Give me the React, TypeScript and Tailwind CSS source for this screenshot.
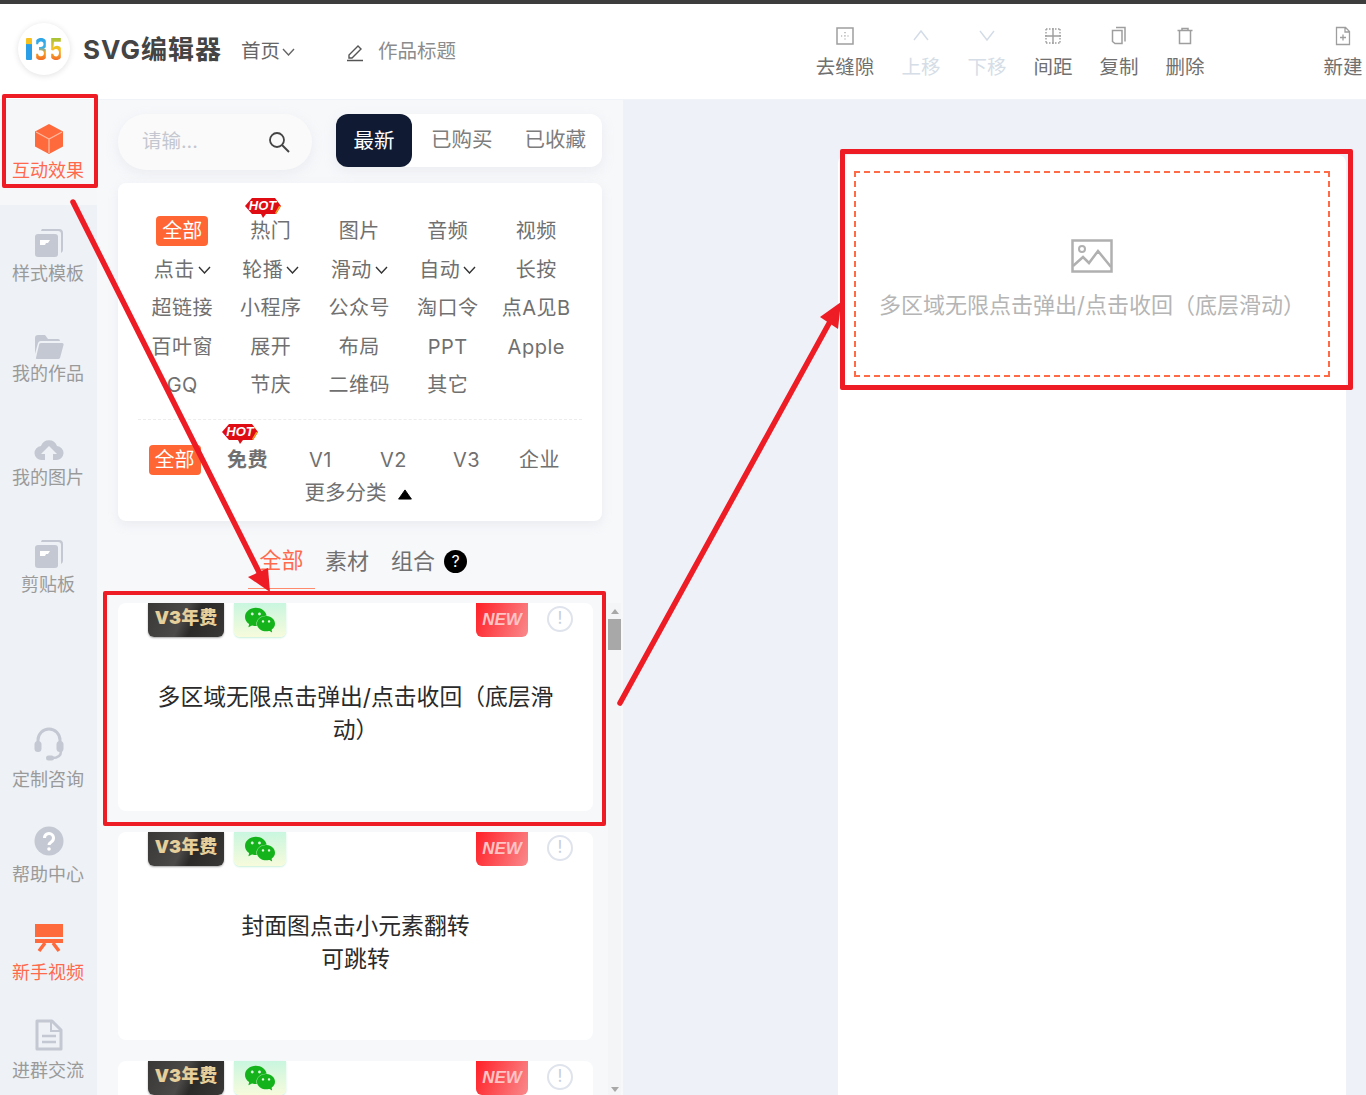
import React from 'react';
import { SiWechat } from 'react-icons/si';

const sideIconClass = 'w-[30px] h-[30px] text-[#c3c8d2]';

const CubeIcon = () => (
    <svg viewBox="0 0 30 32" className="w-[30px] h-[32px]">
        <path d="M15 1 29 8.500V23.500L15 31 1 23.500V8.500Z" fill="#ff6a3c" />
        <path d="M2 9 15 16 28 9M15 16V30" stroke="#ffb9a0" strokeWidth="1.300" fill="none" />
    </svg>
);

const CardsIcon = () => (
    <svg viewBox="0 0 30 30" className={sideIconClass}>
        <path d="M8 1h17a4 4 0 0 1 4 4v17a4 4 0 0 1-2 3V6a3 3 0 0 0-3-3H7a4 4 0 0 1 1-2Z" fill="currentColor" />
        <rect x="1" y="6" width="23" height="23" rx="3" fill="currentColor" />
        <path d="M6 12h10l-2 3h-2l-1 2H6Z" fill="#fff" />
    </svg>
);

const FolderIcon = () => (
    <svg viewBox="0 0 30 26" className="w-[30px] h-[26px] text-[#c3c8d2]">
        <path d="M1 4a3 3 0 0 1 3-3h7l3 4h10a2 2 0 0 1 2 2H7a3 3 0 0 0-3 2L1 20Z" fill="currentColor" />
        <path d="M7 9h21a1.500 1.500 0 0 1 1.500 2L26 24a2 2 0 0 1-2 1H3a1 1 0 0 1-1-1.300L5 11a2 2 0 0 1 2-2Z" fill="currentColor" />
    </svg>
);

const CloudIcon = () => (
    <svg viewBox="0 0 30 24" className="w-[30px] h-[24px] text-[#c3c8d2]">
        <path d="M8 22a7 7 0 0 1-1-14 8.500 8.500 0 0 1 16 0 7 7 0 0 1-1 14h-3v-6h4L15 8l-8 8h4v6Z" fill="currentColor" />
    </svg>
);

const HeadsetIcon = () => (
    <svg viewBox="0 0 30 34" className="w-[30px] h-[34px] text-[#c3c8d2]">
        <path d="M4 16V13a11 11 0 0 1 22 0v3" stroke="currentColor" strokeWidth="3" fill="none" />
        <rect x="0.500" y="14" width="7" height="11" rx="3.500" fill="currentColor" />
        <rect x="22.500" y="14" width="7" height="11" rx="3.500" fill="currentColor" />
        <path d="M27 24c0 5-4 7-9 7" stroke="currentColor" strokeWidth="2.500" fill="none" />
        <rect x="12" y="28.500" width="8" height="5" rx="2.500" fill="currentColor" />
    </svg>
);

const HelpIcon = () => (
    <svg viewBox="0 0 30 30" className={sideIconClass}>
        <circle cx="15" cy="15" r="14.500" fill="currentColor" />
        <path d="M10.500 12a4.500 4.500 0 1 1 7 3.700c-1.500 1-2.500 1.800-2.500 3.300" stroke="#fff" strokeWidth="3" fill="none" />
        <circle cx="15" cy="23" r="1.800" fill="#fff" />
    </svg>
);

const VideoIcon = () => (
    <svg viewBox="0 0 30 30" className="w-[30px] h-[30px] text-[#ff6a3c]">
        <rect x="1" y="1" width="28" height="13" fill="currentColor" />
        <rect x="1" y="16" width="28" height="4" fill="currentColor" />
        <path d="M11 20 5 28M19 20l6 8" stroke="currentColor" strokeWidth="3.500" />
    </svg>
);

const DocIcon = () => (
    <svg viewBox="0 0 30 32" className="w-[30px] h-[32px] text-[#c3c8d2]">
        <path d="M3 2h15l9 9v19H3Z" stroke="currentColor" strokeWidth="3" fill="none" strokeLinejoin="round" />
        <path d="M17 2v10h10" stroke="currentColor" strokeWidth="2" fill="none" />
        <path d="M8 17h14M8 23h14" stroke="currentColor" strokeWidth="2.500" />
    </svg>
);

const sideTop = [
    { label: '样式模板', icon: <CardsIcon />, gap: '' },
    { label: '我的作品', icon: <FolderIcon />, gap: 'mt-[-4px]' },
    { label: '我的图片', icon: <CloudIcon />, gap: 'mt-[-3px]' },
    { label: '剪贴板', icon: <CardsIcon />, gap: '' },
];

const sideBottom = [
    { label: '定制咨询', icon: <HeadsetIcon />, gap: 'mt-[5px]' },
    { label: '帮助中心', icon: <HelpIcon />, gap: 'mt-[3px]' },
    { label: '新手视频', icon: <VideoIcon />, active: true, gap: 'mt-[4px]' },
    { label: '进群交流', icon: <DocIcon />, gap: 'mt-[5px]' },
];

const SideItem = ({ label, icon, active, h, gap }: { label: string; icon: React.ReactNode; active?: boolean; h: string; gap: string }) => (
    <div className={`${h} shrink-0 flex flex-col items-center`}>
        <div className="h-[36px] shrink-0 flex items-center justify-center">{icon}</div>
        <span className={`${gap} pr-[1px] text-[18px] leading-[26px] whitespace-nowrap ${active ? 'text-[#ff6a4d]' : 'text-[#9a9a9a]'}`}>{label}</span>
    </div>
);

const Chevron = ({ className = 'w-[13px] h-[8px] text-[#444]' }: { className?: string }) => (
    <svg viewBox="0 0 13 8" className={className}>
        <path d="M1 1l5.500 6L12 1" stroke="currentColor" strokeWidth="1.400" fill="none" />
    </svg>
);

const toolIconClass = 'w-[20px] h-[20px]';

const tools = [
    {
        label: '去缝隙',
        w: 'w-[86px]',
        disabled: false,
        icon: (
            <svg viewBox="0 0 20 20" className={toolIconClass}>
                <rect x="2" y="2" width="16" height="16" stroke="#9e9e9e" strokeWidth="1.500" fill="none" />
                <path d="M10 6v8M6 10h8" stroke="#9e9e9e" strokeWidth="1.200" strokeDasharray="1.200 2" fill="none" />
            </svg>
        ),
    },
    {
        label: '上移',
        w: 'w-[66px]',
        disabled: true,
        icon: (
            <svg viewBox="0 0 20 20" className={toolIconClass}>
                <path d="M3 14l7-9 7 9" stroke="#d3dce6" strokeWidth="1.400" fill="none" />
            </svg>
        ),
    },
    {
        label: '下移',
        w: 'w-[66px]',
        disabled: true,
        icon: (
            <svg viewBox="0 0 20 20" className={toolIconClass}>
                <path d="M3 5l7 9 7-9" stroke="#d3dce6" strokeWidth="1.400" fill="none" />
            </svg>
        ),
    },
    {
        label: '间距',
        w: 'w-[66px]',
        disabled: false,
        icon: (
            <svg viewBox="0 0 20 20" className={toolIconClass}>
                <path d="M10 2v16M2 10h16" stroke="#9e9e9e" strokeWidth="1.400" fill="none" />
                <path d="M3 3h14M3 17h14M3 3v14M17 3v14" stroke="#9e9e9e" strokeWidth="1.400" strokeDasharray="1.500 1.500" fill="none" />
            </svg>
        ),
    },
    {
        label: '复制',
        w: 'w-[66px]',
        disabled: false,
        icon: (
            <svg viewBox="0 0 20 20" className={toolIconClass}>
                <path d="M7 1.500h9v14" stroke="#9e9e9e" strokeWidth="1.500" fill="none" />
                <path d="M3.500 4.500h9.500v13H6l-2.500-2Z" stroke="#9e9e9e" strokeWidth="1.500" fill="none" />
            </svg>
        ),
    },
    {
        label: '删除',
        w: 'w-[66px]',
        disabled: false,
        icon: (
            <svg viewBox="0 0 20 20" className={toolIconClass}>
                <path d="M2.500 4.500h15M7 4.500v-2h6v2M4.500 4.500v13h11v-13" stroke="#9e9e9e" strokeWidth="1.500" fill="none" />
            </svg>
        ),
    },
];

const HotTag = ({ className }: { className: string }) => (
    <span className={`absolute w-[36px] h-[22px] ${className}`}>
        <svg viewBox="0 0 36 22" className="absolute inset-0 w-[36px] h-[22px]">
            <path d="M7 1h23l6 8-5 8H21l-3 4-2-4H7L0 9Z" fill="#e00c14" />
            <path d="M31 17l5-8-2 0-4 7Z" fill="#f2a21c" />
        </svg>
        <span className="absolute inset-x-0 top-[1px] text-center text-[13px] leading-[16px] font-black italic text-white font-['Liberation_Sans',sans-serif]">HOT</span>
    </span>
);

type Filter = { label: string; active?: boolean; hot?: boolean; arrow?: boolean; bold?: boolean };

const filterRows: Filter[] = [
    { label: '全部', active: true },
    { label: '热门', hot: true },
    { label: '图片' },
    { label: '音频' },
    { label: '视频' },
    { label: '点击', arrow: true },
    { label: '轮播', arrow: true },
    { label: '滑动', arrow: true },
    { label: '自动', arrow: true },
    { label: '长按' },
    { label: '超链接' },
    { label: '小程序' },
    { label: '公众号' },
    { label: '淘口令' },
    { label: '点A见B' },
    { label: '百叶窗' },
    { label: '展开' },
    { label: '布局' },
    { label: 'PPT' },
    { label: 'Apple' },
    { label: 'GQ' },
    { label: '节庆' },
    { label: '二维码' },
    { label: '其它' },
];

const levelRows: Filter[] = [
    { label: '全部', active: true },
    { label: '免费', hot: true, bold: true },
    { label: 'V1' },
    { label: 'V2' },
    { label: 'V3' },
    { label: '企业' },
];

const FilterCell = ({ item, hotClass }: { item: Filter; hotClass: string }) => (
    <div className="relative flex items-center justify-center">
        {item.hot && <HotTag className={hotClass} />}
        {item.active ? (
            <span className="w-[52px] h-[30px] rounded-[4px] bg-[#ff6633] text-white text-[20px] leading-[30px] text-center">{item.label}</span>
        ) : (
            <span className={`text-[20px] leading-[30px] tracking-[0.5px] whitespace-nowrap text-[#707070] ${item.bold ? 'font-bold' : ''}`}>{item.label}</span>
        )}
        {item.arrow && <Chevron className="w-[13px] h-[8px] ml-[3px] text-[#333]" />}
    </div>
);

const Badges = () => (
    <div className="flex items-start pl-[30px] pr-[20px] h-[34px]">
        <div className="w-[76px] h-[34px] rounded-b-[6px] bg-[linear-gradient(115deg,#3a3836_0%,#4c4a48_45%,#2c2a28_60%,#3a3836_100%)] shadow-[0_1px_2px_rgba(0,0,0,0.35)] text-center text-[18px] leading-[30px] font-black text-[#e6cf9a] whitespace-nowrap">
            V3年费
        </div>
        <div className="w-[52px] h-[34px] ml-[10px] rounded-b-[6px] bg-[linear-gradient(180deg,#c9f6df,#f7fbdc)] shadow-[0_1px_2px_rgba(160,230,190,0.6)] flex items-center justify-center">
            <SiWechat className="w-[34px] h-[30px] text-[#14b31c]" />
        </div>
        <div className="w-[52px] h-[34px] ml-auto rounded-b-[6px] bg-[linear-gradient(110deg,#ff2027,#f98a8c)] text-center text-[17px] leading-[33px] font-bold italic text-[#ffc4c4] font-['Liberation_Sans',sans-serif]">
            NEW
        </div>
        <div className="w-[26px] h-[26px] ml-[19px] mt-[3px] rounded-full border-2 border-[#dfe3ec] text-center text-[17px] leading-[21px] text-[#c8cedb]">!</div>
    </div>
);

const cards = [
    ['多区域无限点击弹出/点击收回（底层滑', '动）'],
    ['封面图点击小元素翻转', '可跳转'],
    [''],
];

const App: React.FC = () => {
    return (
        <div className="relative w-[1366px] h-[1095px] overflow-hidden bg-[#eef1f8] font-['Inter','Noto_Sans_CJK_SC',sans-serif]">
            <div className="h-[4px] bg-[#3d3d3d]" />

            {/* шапка */}
            <header className="h-[96px] bg-white flex items-center border-b border-[#f0f3f8]">
                <div className="ml-[18px] mt-[-6px] w-[52px] h-[52px] rounded-full bg-white shadow-[0_1px_6px_rgba(0,0,0,0.12)] flex items-center justify-center gap-[3px] text-[30px] leading-none font-bold">
                    <span className="w-[6px] h-[22px] rounded-[1px] bg-[linear-gradient(180deg,#f6c11e_0%,#f6c11e_25%,#2a9fe8_30%,#2a9fe8_100%)]" />
                    <span className="w-[12px] flex justify-center scale-x-[0.8] bg-[linear-gradient(180deg,#2a9fe8,#3ab0e6_45%,#f6a41e_60%,#f2502c)] bg-clip-text text-transparent">3</span>
                    <span className="w-[12px] flex justify-center scale-x-[0.8] bg-[linear-gradient(180deg,#86c440,#f6c11e_50%,#f2502c)] bg-clip-text text-transparent">5</span>
                </div>
                <span className="ml-[13px] mt-[-4px] text-[26px] font-bold tracking-[1px] text-[#444] whitespace-nowrap">SVG编辑器</span>
                <span className="ml-[19px] text-[19.500px] text-[#666]">首页</span>
                <Chevron className="ml-[2px] w-[13px] h-[8px] text-[#666]" />
                <svg viewBox="0 0 20 20" className="ml-[50px] w-[20px] h-[20px]">
                    <path d="M4 13l9-9 3 3-9 9H4ZM2 18.500h16" stroke="#555" strokeWidth="1.400" fill="none" />
                </svg>
                <span className="ml-[13px] text-[19.500px] text-[#8c8c8c]">作品标题</span>

                <div className="ml-[346px] flex pt-[4px]">
                    {tools.map((t) => (
                        <div key={t.label} className={`${t.w} flex flex-col items-center`}>
                            {t.icon}
                            <span className={`mt-[7px] text-[19.500px] leading-[28px] whitespace-nowrap ${t.disabled ? 'text-[#d5dde6]' : 'text-[#707070]'}`}>{t.label}</span>
                        </div>
                    ))}
                </div>
                <div className="ml-auto w-[46px] pt-[4px] flex flex-col items-center">
                    <svg viewBox="0 0 20 20" className={toolIconClass}>
                        <path d="M3.500 1.500h9l4 4v13h-13ZM12 1.500v4.500h4.500M10 8.500v6M7 11.500h6" stroke="#9e9e9e" strokeWidth="1.300" fill="none" />
                    </svg>
                    <span className="mt-[7px] text-[19.500px] leading-[28px] whitespace-nowrap text-[#707070]">新建</span>
                </div>
            </header>

            <div className="flex h-[995px]">
                {/* боковое меню */}
                <aside className="w-[97px] shrink-0 bg-[#eef1f5] flex flex-col overflow-hidden">
                    <div className="h-[105px] shrink-0 bg-[#f6f7f9] pt-[21px] flex flex-col items-center">
                        <div className="h-[36px] flex items-center justify-center"><CubeIcon /></div>
                        <span className="mt-[1px] pr-[1px] text-[18px] leading-[26px] whitespace-nowrap text-[#ff6a4d]">互动效果</span>
                    </div>
                    <div className="pt-[20px] shrink-0">
                        {sideTop.map((s) => (
                            <SideItem key={s.label} label={s.label} icon={s.icon} gap={s.gap} h="h-[103.500px]" />
                        ))}
                    </div>
                    <div className="mt-[87px] shrink-0">
                        {sideBottom.map((s) => (
                            <SideItem key={s.label} label={s.label} icon={s.icon} gap={s.gap} active={s.active} h="h-[97px]" />
                        ))}
                    </div>
                </aside>

                {/* панель */}
                <section className="w-[526px] shrink-0 bg-[#f7f8fa] flex flex-col overflow-hidden">
                    <div className="mt-[14px] mx-[21px] flex items-start gap-[24px]">
                        <div className="w-[194px] h-[56px] rounded-full bg-[#fafafa] shadow-[0_4px_12px_rgba(200,205,215,0.25)] flex items-center justify-between pl-[24px] pr-[22px]">
                            <span className="text-[19.500px] text-[#c4c7cf]">请输...</span>
                            <svg viewBox="0 0 22 22" className="w-[22px] h-[22px]">
                                <circle cx="9" cy="9" r="7" stroke="#444" strokeWidth="1.800" fill="none" />
                                <path d="M14 14l7 7" stroke="#444" strokeWidth="2" />
                            </svg>
                        </div>
                        <div className="w-[266px] h-[53px] rounded-[12px] bg-white shadow-[0_4px_12px_rgba(200,205,215,0.25)] flex items-center text-[20.500px] text-[#7d7d7d]">
                            <span className="w-[76px] h-[53px] rounded-[12px] bg-[#101b33] text-white text-center leading-[53px]">最新</span>
                            <span className="ml-[19px]">已购买</span>
                            <span className="ml-[32px]">已收藏</span>
                        </div>
                    </div>

                    <div className="mt-[13px] mx-[21px] h-[338px] shrink-0 rounded-[8px] bg-white shadow-[0_4px_10px_rgba(200,205,215,0.25)] flex flex-col">
                        <div className="pt-[29px] pl-[20px] grid grid-cols-[repeat(5,88.500px)] auto-rows-[38.500px]">
                            {filterRows.map((f) => (
                                <FilterCell key={f.label} item={f} hotClass="left-[18px] top-[-15px]" />
                            ))}
                        </div>
                        <div className="mt-[14px] mx-[20px] border-t border-dashed border-[#ececec]" />
                        <div className="mt-[21px] pl-[20px] grid grid-cols-[repeat(6,73px)] h-[38px]">
                            {levelRows.map((f) => (
                                <FilterCell key={f.label} item={f} hotClass="left-[11px] top-[-18px]" />
                            ))}
                        </div>
                        <div className="h-[28px] pt-[1px] flex items-center justify-center pr-[3px]">
                            <span className="text-[20.500px] text-[#707070]">更多分类</span>
                            <svg viewBox="0 0 16 12" className="ml-[10px] mt-[3px] w-[16px] h-[11px]">
                                <path d="M8 1l7 10H1Z" fill="#000" stroke="#000" strokeLinejoin="round" />
                            </svg>
                        </div>
                    </div>

                    <div className="h-[68px] shrink-0 pl-[151px] flex items-center">
                        <div className="w-[67px] h-[68px] border-b border-[#ff8a6c] flex items-center justify-center pt-[12px] text-[22px] text-[#ff6a4d]">全部</div>
                        <span className="ml-[-1px] w-[66px] text-center pt-[12px] text-[22px] text-[#707070]">素材</span>
                        <span className="w-[66px] text-center pt-[12px] text-[22px] text-[#707070]">组合</span>
                        <span className="ml-[-2px] mt-[12px] w-[23px] h-[23px] rounded-full bg-black text-white text-center text-[16px] leading-[23px]">?</span>
                    </div>

                    <div className="flex-1 flex mt-[14px] overflow-hidden">
                        <div className="ml-[21px] w-[475px] flex flex-col gap-[21px]">
                            {cards.map((lines, i) => (
                                <div key={i} className="h-[208px] shrink-0 rounded-[8px] bg-white">
                                    <Badges />
                                    <div className="mt-[43px] text-center text-[22.800px] leading-[33px] text-[#2a2a2a]">
                                        {lines.map((l) => (
                                            <div key={l}>{l}</div>
                                        ))}
                                    </div>
                                </div>
                            ))}
                        </div>
                        <div className="ml-[15px] w-[13px] bg-[#f4f5f6] flex flex-col items-center pt-[6px]">
                            <svg viewBox="0 0 8 5" className="w-[8px] h-[5px]"><path d="M4 0l4 5H0Z" fill="#a8a8a8" /></svg>
                            <div className="mt-[5px] w-[13px] h-[31px] bg-[#a8a8a8]" />
                            <div className="flex-1" />
                            <svg viewBox="0 0 8 5" className="w-[8px] h-[5px] mb-[3px]"><path d="M4 5l4-5H0Z" fill="#a8a8a8" /></svg>
                        </div>
                    </div>
                </section>

                {/* холст */}
                <main className="flex-1 pl-[215px] pt-[55px]">
                    <div className="w-[508px] h-[940px] rounded-t-[8px] bg-white pt-[16px] pl-[16px]">
                        <div className="w-[476px] h-[206px] border-2 border-dashed border-[#ff6b47] flex flex-col items-center pt-[66px]">
                            <svg viewBox="0 0 42 34" className="w-[42px] h-[34px]">
                                <rect x="1.500" y="1.500" width="39" height="31" fill="none" stroke="#b0b0b0" strokeWidth="2.500" />
                                <circle cx="11" cy="10" r="3" fill="none" stroke="#b0b0b0" strokeWidth="2" />
                                <path d="M2 27l10-9 6 6 9-12 13 16" fill="none" stroke="#b0b0b0" strokeWidth="2.500" />
                            </svg>
                            <span className="mt-[16px] text-[22px] leading-[32px] whitespace-nowrap text-[#b5b5b5]">多区域无限点击弹出/点击收回（底层滑动）</span>
                        </div>
                    </div>
                </main>
            </div>

            {/* красные пометки поверх страницы */}
            <div className="absolute left-[2px] top-[94px] w-[96px] h-[94px] border-[4px] border-[#ee1c25] rounded-[2px]" />
            <div className="absolute left-[103px] top-[591px] w-[503px] h-[235px] border-[4px] border-[#ee1c25] rounded-[2px]" />
            <div className="absolute left-[840px] top-[149px] w-[513px] h-[241px] border-[5px] border-[#ee1c25] rounded-[2px]" />
            <svg viewBox="0 0 1366 1095" className="absolute inset-0 w-[1366px] h-[1095px] pointer-events-none">
                <path d="M73 202 262 578" stroke="#ee1c25" strokeWidth="5.500" strokeLinecap="round" fill="none" />
                <path d="M270 592 248 577 268 568Z" fill="#ee1c25" />
                <path d="M620 703 832 318" stroke="#ee1c25" strokeWidth="5.500" strokeLinecap="round" fill="none" />
                <path d="M841 302 820 317 838 329Z" fill="#ee1c25" />
            </svg>
        </div>
    );
};

export default App;
